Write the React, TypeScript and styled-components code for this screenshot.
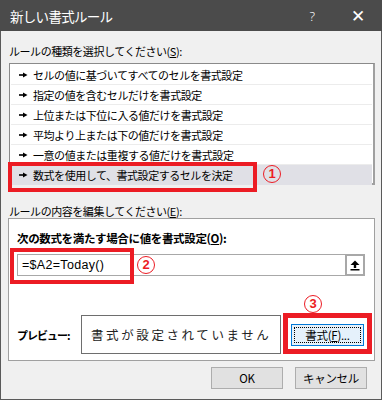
import React from "react";
import styled, { createGlobalStyle } from "styled-components";

const Global = createGlobalStyle`
  html, body { margin: 0; padding: 0; background: #f0f0f0; }
  body { font-family: "Noto Sans CJK JP", "Noto Sans", sans-serif; color: #000; }
  * { box-sizing: border-box; }
`;

const RED = "#ec1c24";

const Dialog = styled.div`
  position: relative;
  width: 382px;
  height: 400px;
  background: #f0f0f0;
  border-left: 1px solid #5a5a5a;
  border-right: 1px solid #5a5a5a;
  border-bottom: 1px solid #5a5a5a;
  display: flex;
  flex-direction: column;
`;

const TitleBar = styled.div`
  height: 31px;
  margin: 0 -1px;
  background: #4b4b4b;
  color: #fff;
  display: flex;
  align-items: center;
  padding-left: 10px;
  font-size: 13.5px;
  letter-spacing: -0.7px;
`;

const Title = styled.span`
  flex: 1;
`;

const TitleBtn = styled.span<{ $w: number; $mr?: number }>`
  width: ${(p) => p.$w}px;
  margin-right: ${(p) => p.$mr ?? 0}px;
  text-align: center;
  font-family: "Noto Sans", sans-serif;
  font-size: ${(p) => (p.$w > 40 ? 17 : 13)}px;
  font-weight: 300;
`;

const Body = styled.div`
  padding: 0 7px 0 7px;
  display: flex;
  flex-direction: column;
`;

const Label = styled.div<{ $mt: number }>`
  margin-top: ${(p) => p.$mt}px;
  margin-left: 1px;
  font-size: 11px;
  line-height: 14px;
  letter-spacing: -0.45px;
  white-space: nowrap;
  u { text-decoration: underline; }
`;

const List = styled.div`
  position: relative;
  margin-top: 5px;
  margin-left: 1px;
  width: 366px;
  height: 122px;
  border: 1px solid #8a8a8a;
  border-right-width: 2px;
  border-bottom-width: 2px;
  border-right-color: #a0a0a0;
  border-bottom-color: #a0a0a0;
  background: #fff;
  padding: 1px 1px 0 1px;
`;

const Row = styled.div<{ $sel?: boolean }>`
  height: 20px;
  display: flex;
  align-items: center;
  padding-left: 8px;
  gap: 5px;
  font-size: 11px;
  letter-spacing: -0.45px;
  white-space: nowrap;
  background: ${(p) => (p.$sel ? "#e0e0e6" : "#fff")};
  border-bottom: 1px solid ${(p) => (p.$sel ? "#e0e0e6" : "#ececec")};
`;

const Marker = () => (
  <svg width="9" height="6" viewBox="0 0 9 6" style={{ flex: "none" }}>
    <rect x="0" y="2.2" width="5" height="1.6" fill="#000" />
    <polygon points="4,0.5 8.5,3 4,5.5" fill="#000" />
  </svg>
);

const RedBox = styled.div<{ $l: number; $t: number; $w: number; $h: number; $b: number }>`
  position: absolute;
  left: ${(p) => p.$l}px;
  top: ${(p) => p.$t}px;
  width: ${(p) => p.$w}px;
  height: ${(p) => p.$h}px;
  border: ${(p) => p.$b}px solid ${RED};
  pointer-events: none;
`;

const Circled = styled.div<{ $l: number; $t: number }>`
  position: absolute;
  left: ${(p) => p.$l}px;
  top: ${(p) => p.$t}px;
  width: 18px;
  height: 18px;
  border: 1.3px solid ${RED};
  border-radius: 50%;
  color: ${RED};
  font-family: "Liberation Sans", sans-serif;
  font-weight: bold;
  font-size: 13px;
  line-height: 16px;
  text-align: center;
`;

const Group = styled.div`
  margin-top: 0;
  width: 367px;
  height: 143px;
  border: 1px solid #a0a0a0;
  background: #fff;
  padding: 0 0 0 8px;
  display: flex;
  flex-direction: column;
`;

const BoldLabel = styled.div`
  margin-top: 12px;
  font-size: 11.5px;
  font-weight: bold;
  line-height: 14px;
  letter-spacing: -0.35px;
  white-space: nowrap;
  u { text-decoration: underline; }
`;

const InputRow = styled.div`
  margin-top: 9px;
  display: flex;
  height: 22px;
`;

const Input = styled.div`
  width: 328px;
  height: 22px;
  border: 1px solid #a8a8a8;
  border-right: none;
  padding-left: 4px;
  font-family: "Liberation Sans", sans-serif;
  font-size: 12.5px;
  letter-spacing: 0.3px;
  line-height: 20px;
`;

const RefBtn = styled.div`
  width: 20px;
  height: 22px;
  border: 2px solid #a8a8a8;
  background: #fff;
  display: flex;
  align-items: center;
  justify-content: center;
`;

const PreviewRow = styled.div`
  margin-top: 39px;
  display: flex;
  align-items: center;
  height: 39px;
`;

const PreviewLabel = styled.div`
  width: 64px;
  font-size: 11px;
  font-weight: bold;
  letter-spacing: -1px;
  white-space: nowrap;
`;

const PreviewBox = styled.div`
  width: 200px;
  height: 39px;
  border: 1px solid #6e6e6e;
  display: flex;
  align-items: center;
  padding-left: 9px;
  font-size: 12.5px;
  letter-spacing: 2.6px;
  color: #222;
  white-space: nowrap;
`;

const FormatBtn = styled.div`
  margin-left: 10px;
  width: 73px;
  height: 22px;
  border: 1px solid #0078d7;
  background: #e5f1fb;
  padding: 2px;
  display: flex;
`;

const FocusRect = styled.div`
  flex: 1;
  border: 1px dotted #000;
  display: flex;
  align-items: center;
  justify-content: center;
  font-size: 11.5px;
  letter-spacing: -0.3px;
  white-space: nowrap;
  u { text-decoration: underline; }
`;

const Footer = styled.div`
  margin-top: 6px;
  display: flex;
  justify-content: flex-end;
  gap: 12px;
  padding-right: 7px;
`;

const Button = styled.div`
  width: 72px;
  height: 22px;
  background: #e1e1e1;
  border: 1px solid #adadad;
  display: flex;
  align-items: center;
  justify-content: center;
  font-size: 11.5px;
  letter-spacing: -0.3px;
`;

const rules = [
  "セルの値に基づいてすべてのセルを書式設定",
  "指定の値を含むセルだけを書式設定",
  "上位または下位に入る値だけを書式設定",
  "平均より上または下の値だけを書式設定",
  "一意の値または重複する値だけを書式設定",
  "数式を使用して、書式設定するセルを決定",
];

export default function App() {
  return (
    <>
      <Global />
      <Dialog>
        <TitleBar>
          <Title>新しい書式ルール</Title>
          <TitleBtn $w={20} $mr={12}>?</TitleBtn>
          <TitleBtn $w={48}>✕</TitleBtn>
        </TitleBar>
        <Body>
          <Label $mt={13}>
            ルールの種類を選択してください(<u>S</u>):
          </Label>
          <List>
            {rules.map((r, i) => (
              <Row key={r} $sel={i === 5}>
                <Marker />
                {r}
              </Row>
            ))}
          </List>
          <Label $mt={19}>
            ルールの内容を編集してください(<u>E</u>):
          </Label>
          <Group>
            <BoldLabel>
              次の数式を満たす場合に値を書式設定(<u>O</u>):
            </BoldLabel>
            <InputRow>
              <Input>=$A2=Today()</Input>
              <RefBtn>
                <svg width="10" height="11" viewBox="0 0 10 11">
                  <polygon points="5,0.5 9.5,5 0.5,5" fill="#000" />
                  <rect x="3.8" y="4.5" width="2.4" height="3.5" fill="#000" />
                  <rect x="0.5" y="9" width="9" height="1.5" fill="#000" />
                </svg>
              </RefBtn>
            </InputRow>
            <PreviewRow>
              <PreviewLabel>プレビュー:</PreviewLabel>
              <PreviewBox>書式が設定されていません</PreviewBox>
              <FormatBtn>
                <FocusRect>
                  書式(<u>F</u>)...
                </FocusRect>
              </FormatBtn>
            </PreviewRow>
          </Group>
          <Footer>
            <Button>OK</Button>
            <Button>キャンセル</Button>
          </Footer>
        </Body>
        <RedBox $l={7} $t={162} $w={249} $h={30} $b={4} />
        <Circled $l={262} $t={165}>1</Circled>
        <RedBox $l={9} $t={248} $w={124} $h={36} $b={4} />
        <Circled $l={136} $t={256}>2</Circled>
        <RedBox $l={282} $t={313} $w={89} $h={41} $b={5} />
        <Circled $l={303} $t={295}>3</Circled>
      </Dialog>
    </>
  );
}
